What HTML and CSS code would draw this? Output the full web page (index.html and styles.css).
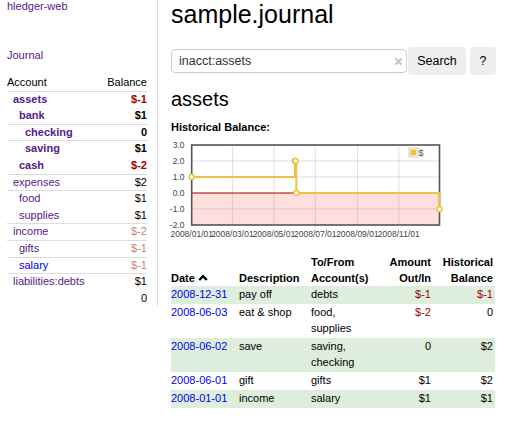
FILE: index.html
```html
<!DOCTYPE html>
<html lang="en">
<head>
  <meta charset="UTF-8" />
  <title>sample.journal - hledger-web</title>
  <link rel="stylesheet" href="styles.css">
</head>
<body>

<div class="page">
  <div class="sidebar">
    <a href="#" class="brand">hledger-web</a>
    <a href="#" class="journal">Journal</a>

    <table class="accounts">
      <tr>
        <th class="name">Account</th>
        <th class="bal">Balance</th>
      </tr>
      <tr class="sep inacct">
        <td class="name lvl0"><a href="#">assets</a></td>
        <td class="bal neg">$-1</td>
      </tr>
      <tr class="inacct">
        <td class="name lvl1"><a href="#">bank</a></td>
        <td class="bal">$1</td>
      </tr>
      <tr class="sep inacct">
        <td class="name lvl2"><a href="#">checking</a></td>
        <td class="bal">0</td>
      </tr>
      <tr class="sep inacct">
        <td class="name lvl2"><a href="#">saving</a></td>
        <td class="bal">$1</td>
      </tr>
      <tr class="inacct">
        <td class="name lvl1"><a href="#">cash</a></td>
        <td class="bal neg">$-2</td>
      </tr>
      <tr class="sep">
        <td class="name lvl0"><a href="#">expenses</a></td>
        <td class="bal">$2</td>
      </tr>
      <tr class="sep">
        <td class="name lvl1"><a href="#">food</a></td>
        <td class="bal">$1</td>
      </tr>
      <tr>
        <td class="name lvl1"><a href="#">supplies</a></td>
        <td class="bal">$1</td>
      </tr>
      <tr class="sep">
        <td class="name lvl0"><a href="#">income</a></td>
        <td class="bal dim">$-2</td>
      </tr>
      <tr class="sep">
        <td class="name lvl1"><a href="#">gifts</a></td>
        <td class="bal dim">$-1</td>
      </tr>
      <tr class="sep">
        <td class="name lvl1"><a href="#" class="fresh">salary</a></td>
        <td class="bal dim">$-1</td>
      </tr>
      <tr class="sep">
        <td class="name lvl0"><a href="#">liabilities:debts</a></td>
        <td class="bal">$1</td>
      </tr>
      <tr>
        <td class="name"></td>
        <td class="bal">0</td>
      </tr>
    </table>
  </div>

  <div class="main">
    <h1>sample.journal</h1>

    <form class="search">
      <div class="query">
        <input type="text" value="inacct:assets">
        <span class="clear">
          <svg width="9" height="9" viewBox="0 0 9 9"><path d="M1.5 1.5 L7.5 7.5 M7.5 1.5 L1.5 7.5" /></svg>
        </span>
      </div>
      <button type="button" class="btn btn-search">Search</button>
      <button type="button" class="btn btn-help">?</button>
    </form>

    <h2>assets</h2>
    <div class="chart-title">Historical Balance:</div>

    <svg class="chart" width="285" height="104" viewBox="0 0 285 104">
      <rect class="below" x="25.7" y="57" width="247.8" height="32" />
      <g class="grid">
        <line x1="66.4" y1="9" x2="66.4" y2="89" />
        <line x1="107.9" y1="9" x2="107.9" y2="89" />
        <line x1="149.3" y1="9" x2="149.3" y2="89" />
        <line x1="191.4" y1="9" x2="191.4" y2="89" />
        <line x1="232.8" y1="9" x2="232.8" y2="89" />
        <line x1="25.7" y1="25" x2="273.5" y2="25" />
        <line x1="25.7" y1="41" x2="273.5" y2="41" />
        <line x1="25.7" y1="73" x2="273.5" y2="73" />
      </g>
      <line class="zero" x1="25.7" y1="57" x2="273.5" y2="57" />
      <rect class="frame" x="25.7" y="9" width="247.8" height="80" />
      <g class="ylabels">
        <text x="18.5" y="12">3.0</text>
        <text x="18.5" y="28">2.0</text>
        <text x="18.5" y="44">1.0</text>
        <text x="18.5" y="60">0.0</text>
        <text x="18.5" y="76">-1.0</text>
        <text x="18.5" y="92">-2.0</text>
      </g>
      <g class="xlabels">
        <text x="25.7" y="101">2008/01/01</text>
        <text x="66.4" y="101">2008/03/01</text>
        <text x="107.9" y="101">2008/05/01</text>
        <text x="149.3" y="101">2008/07/01</text>
        <text x="191.4" y="101">2008/09/01</text>
        <text x="232.8" y="101">2008/11/01</text>
      </g>
      <path class="series" d="M25.7 41 H128.9 V25 H130.3 V57 H273.5 V73" />
      <g class="points">
        <circle cx="25.7" cy="41" r="2.5" />
        <circle cx="128.9" cy="25" r="2.5" />
        <circle cx="129.6" cy="25" r="2.5" />
        <circle cx="130.3" cy="57" r="2.5" />
        <circle cx="273.5" cy="73" r="2.5" />
      </g>
      <rect class="legend-box" x="243" y="12" width="9" height="9" />
      <rect class="legend-swatch" x="244.5" y="13.5" width="6" height="6" />
      <text class="legend-label" x="252.5" y="20">$</text>
    </svg>

    <table class="register">
      <colgroup>
        <col class="c-date">
        <col class="c-desc">
        <col class="c-acct">
        <col class="c-amt">
        <col class="c-bal">
      </colgroup>
      <tr>
        <th>Date<svg class="sort" width="10" height="7" viewBox="0 0 10 7"><path d="M1.2 6 L5 2.2 L8.8 6" /></svg></th>
        <th>Description</th>
        <th>To/From Account(s)</th>
        <th class="num">Amount Out/In</th>
        <th class="num">Historical Balance</th>
      </tr>
      <tr class="odd">
        <td><a href="#" class="fresh">2008-12-31</a></td>
        <td>pay off</td>
        <td>debts</td>
        <td class="num neg">$-1</td>
        <td class="num neg">$-1</td>
      </tr>
      <tr>
        <td><a href="#" class="fresh">2008-06-03</a></td>
        <td>eat &amp; shop</td>
        <td>food, supplies</td>
        <td class="num neg">$-2</td>
        <td class="num">0</td>
      </tr>
      <tr class="odd">
        <td><a href="#" class="fresh">2008-06-02</a></td>
        <td>save</td>
        <td>saving, checking</td>
        <td class="num">0</td>
        <td class="num">$2</td>
      </tr>
      <tr>
        <td><a href="#" class="fresh">2008-06-01</a></td>
        <td>gift</td>
        <td>gifts</td>
        <td class="num">$1</td>
        <td class="num">$2</td>
      </tr>
      <tr class="odd">
        <td><a href="#" class="fresh">2008-01-01</a></td>
        <td>income</td>
        <td>salary</td>
        <td class="num">$1</td>
        <td class="num">$1</td>
      </tr>
    </table>
  </div>
</div>

</body>
</html>
```

FILE: styles.css
```css
body {
  margin: 0;
  font-family: "Liberation Sans", Arial, sans-serif;
  font-size: 11px;
  color: #000;
  background: #fff;
}

a {
  color: #551a8b;
  text-decoration: none;
}

a.fresh {
  color: #0000ee;
}

.page {
  display: flex;
  align-items: flex-start;
}

/* sidebar */

.sidebar {
  width: 140px;
  padding: 0 10px 0 7px;
  border-right: 1px solid #ddd;
  line-height: 13px;
}

.brand,
.journal {
  display: block;
}

.journal {
  margin-top: 36px;
}

.accounts {
  width: 140px;
  margin-top: 13px;
  border-spacing: 0;
}

.accounts th {
  font-weight: normal;
  padding: 1px 0;
  line-height: 13.6px;
}

.accounts td {
  padding: 1px 0;
  line-height: 13.6px;
  border-top: 1px solid transparent;
}

.accounts .sep td {
  border-top-color: #ddd;
}

.accounts .name {
  text-align: left;
}

.accounts .bal {
  text-align: right;
}

.lvl0 { padding-left: 6px !important; }
.lvl1 { padding-left: 12px !important; }
.lvl2 { padding-left: 18px !important; }

.inacct a,
.inacct .bal {
  font-weight: bold;
}

.neg {
  color: #990000;
}

.dim {
  color: #c98080;
}

/* main */

.main {
  padding-left: 13px;
}

h1 {
  margin: 0;
  font-size: 25px;
  font-weight: normal;
  line-height: 28px;
}

.search {
  display: flex;
  align-items: center;
  margin: 19px 0 0;
}

.query {
  position: relative;
  width: 236px;
  height: 24px;
}

.query input {
  box-sizing: border-box;
  width: 100%;
  height: 24px;
  margin: 0;
  padding: 0 20px 0 7px;
  border: 1px solid #ccc;
  border-radius: 4px;
  font-family: "Liberation Sans", Arial, sans-serif;
  font-size: 12.5px;
  color: #333;
}

.clear {
  position: absolute;
  right: 4px;
  top: 8px;
  line-height: 0;
}

.clear path {
  stroke: #cdc3dc;
  stroke-width: 2.4;
  fill: none;
}

.btn {
  height: 28px;
  margin: 0;
  padding: 0;
  border: none;
  border-radius: 4px;
  background: #eee;
  font-family: "Liberation Sans", Arial, sans-serif;
  font-size: 12.5px;
  color: #000;
  cursor: pointer;
}

.btn-search {
  width: 58px;
  margin-left: 1px;
}

.btn-help {
  width: 26px;
  margin-left: 4px;
}

h2 {
  margin: 12px 0 0;
  font-size: 20px;
  font-weight: normal;
  line-height: 24px;
}

.chart-title {
  margin-top: 10px;
  font-weight: bold;
  line-height: 13px;
}

/* chart */

.chart {
  display: block;
  margin: 2px 0 0 -5px;
  font-family: "Liberation Sans", Arial, sans-serif;
}

.chart .below {
  fill: #ffdede;
}

.chart .grid line {
  stroke: rgba(0, 0, 0, 0.12);
  stroke-width: 1;
}

.chart .zero {
  stroke: #a00000;
  stroke-width: 1;
}

.chart .frame {
  fill: none;
  stroke: #545454;
  stroke-width: 1.6;
}

.chart text {
  font-size: 8.5px;
  fill: #444;
}

.chart .ylabels text {
  text-anchor: end;
}

.chart .xlabels text {
  text-anchor: middle;
}

.chart .series {
  fill: none;
  stroke: #edc240;
  stroke-width: 2;
}

.chart .points circle {
  fill: #fff;
  stroke: #edc240;
  stroke-width: 1.5;
}

.chart .legend-box {
  fill: #fff;
  stroke: #ccc;
  stroke-width: 1;
}

.chart .legend-swatch {
  fill: #edc240;
}

.chart .legend-label {
  font-size: 9px;
  fill: #545454;
}

/* register */

.register {
  width: 324px;
  margin-top: 14px;
  border-spacing: 0;
  table-layout: fixed;
}

.c-date { width: 68px; }
.c-desc { width: 72px; }
.c-acct { width: 64px; }
.c-amt { width: 58px; }
.c-bal { width: 62px; }

.register th {
  padding: 0 2px 0 0;
  line-height: 16px;
  text-align: left;
  vertical-align: bottom;
}

.register td {
  padding: 0 2px 2px 0;
  line-height: 16px;
  vertical-align: top;
}

.register .num {
  text-align: right;
}

.register .odd td {
  background: #ddeedd;
}

.sort {
  margin-left: 3px;
  vertical-align: 1px;
}

.sort path {
  fill: none;
  stroke: #000;
  stroke-width: 2.4;
}
```
